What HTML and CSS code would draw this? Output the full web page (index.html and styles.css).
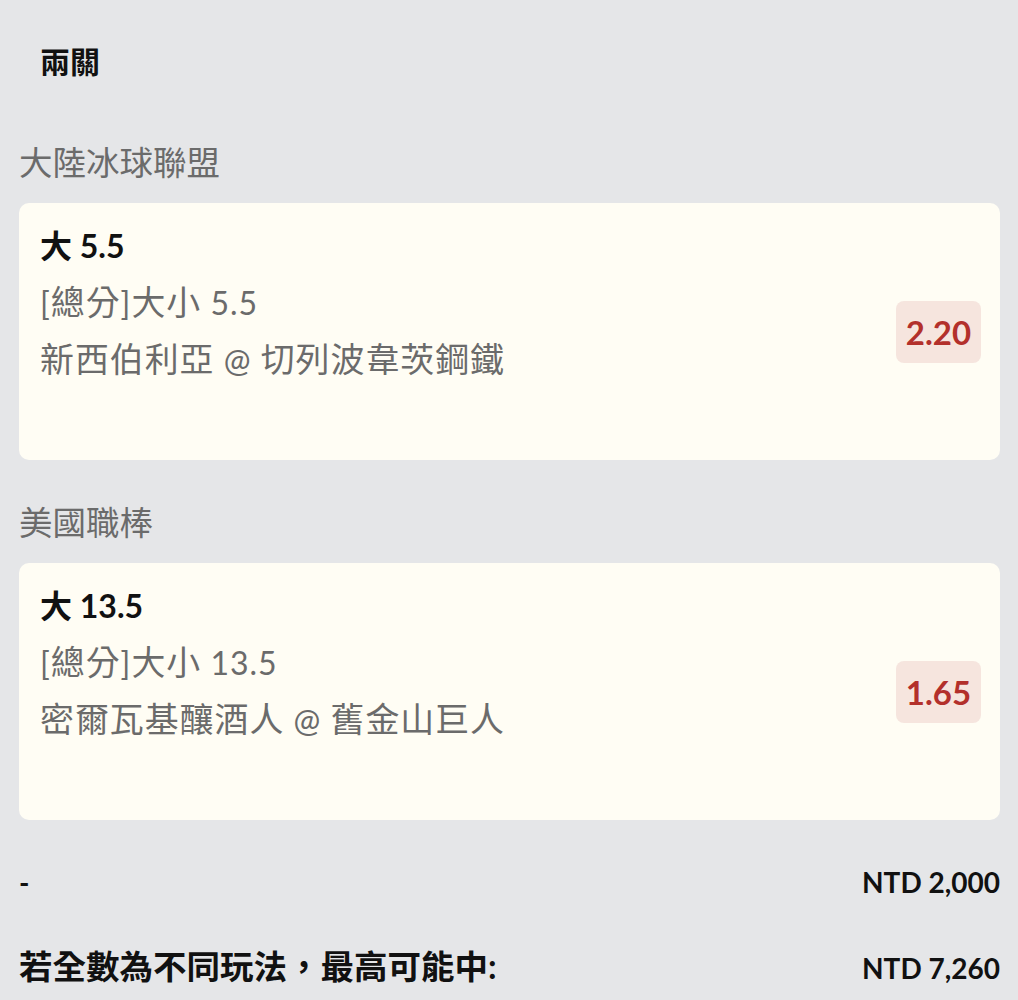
FILE: index.html
```html
<!DOCTYPE html>
<html lang="zh-Hant">
<head>
  <meta charset="UTF-8" />
  <title>兩關</title>
  <link rel="stylesheet" href="styles.css">
</head>
<body>
  <h1 class="bet-title">兩關</h1>

  <section class="leg">
    <h2 class="league">大陸冰球聯盟</h2>
    <div class="card">
      <div class="card-info">
        <div class="pick">大 5.5</div>
        <div class="market">[<span class="zh">總分</span>]<span class="zh">大小</span> 5.5</div>
        <div class="match"><span class="zh">新西伯利亞</span> @ <span class="zh">切列波韋茨鋼鐵</span></div>
      </div>
      <div class="odds">2.20</div>
    </div>
  </section>

  <section class="leg">
    <h2 class="league">美國職棒</h2>
    <div class="card">
      <div class="card-info">
        <div class="pick">大 13.5</div>
        <div class="market">[<span class="zh">總分</span>]<span class="zh">大小</span> 13.5</div>
        <div class="match"><span class="zh">密爾瓦基釀酒人</span> @ <span class="zh">舊金山巨人</span></div>
      </div>
      <div class="odds">1.65</div>
    </div>
  </section>

  <div class="summary">
    <div class="summary-row">
      <span>-</span>
      <span>NTD 2,000</span>
    </div>
    <div class="summary-row">
      <span class="summary-label">若全數為不同玩法，最高可能中:</span>
      <span>NTD 7,260</span>
    </div>
  </div>
</body>
</html>
```

FILE: styles.css
```css
body {
  background: #e5e6e8;
  font-family: Lato, "Noto Sans CJK TC", sans-serif;
  color: #111;
  margin: 0;
  padding: 0 18px 0 19px;
}

/* CJK glyphs render a little larger than the latin text */
.zh {
  font-size: 1.06em;
}

.bet-title {
  font-size: 30px;
  font-weight: 700;
  line-height: 40px;
  margin: 41px 0 0 21px;
}

.league {
  font-size: 33.5px;
  font-weight: 400;
  color: #6b6b6b;
  line-height: 40px;
  margin: 0;
}

.leg:first-of-type .league {
  margin-top: 61px;
}

.leg {
  margin-bottom: 42px;
}

/* bet card */
.card {
  background: #fffdf4;
  border-radius: 10px;
  height: 257px;
  box-sizing: border-box;
  margin-top: 21px;
  padding: 14px 19px 0 21px;
  display: flex;
  align-items: center;
}

.card-info {
  flex: 1;
  align-self: flex-start;
  line-height: 57px;
  font-size: 32px;
}

.pick {
  font-weight: 700;
  color: #111;
}

.market,
.match {
  color: #6b6b6b;
  letter-spacing: 1px;
}

.odds {
  background: #f6e5de;
  color: #b3302b;
  font-size: 33px;
  font-weight: 700;
  width: 85px;
  height: 62px;
  line-height: 62px;
  text-align: center;
  border-radius: 8px;
  margin-top: -14px;
}

.summary {
  margin-top: 38px;
}

.summary-row {
  display: flex;
  justify-content: space-between;
  align-items: baseline;
  font-size: 28px;
  font-weight: 700;
  line-height: 40px;
  margin-bottom: 44px;
}

.summary-label {
  font-size: 33.5px;
}
```
